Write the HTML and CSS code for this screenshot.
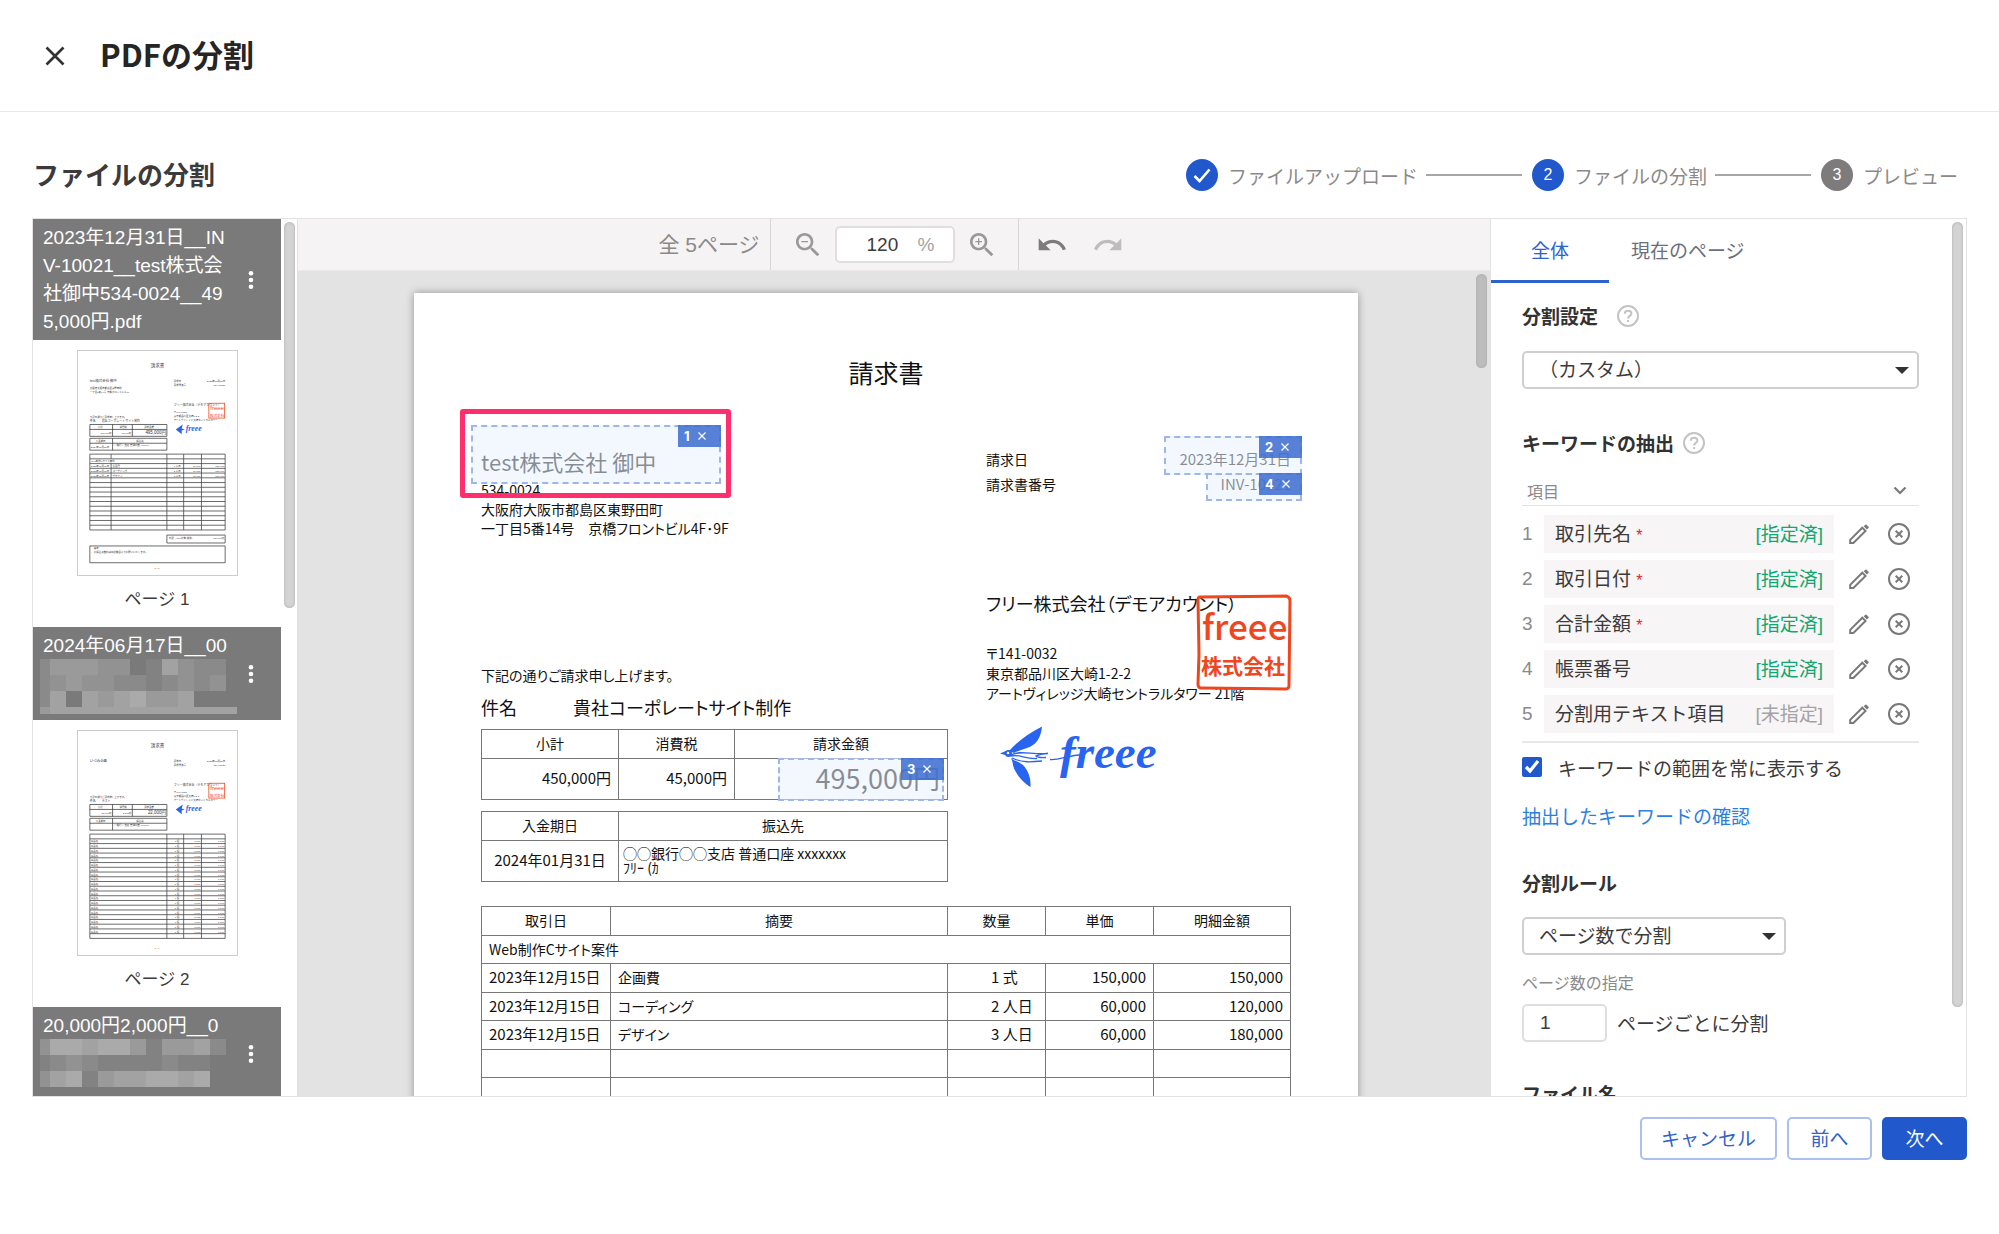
FILE: index.html
```html
<!DOCTYPE html>
<html lang="ja">
<head>
    <meta charset="UTF-8">
    <meta name="viewport" content="width=device-width, initial-scale=1.0">
    <title>PDFの分割</title>
    <link rel="stylesheet" href="styles.css">
</head>
<body>

    <header class="page-header">
        <button class="icon-btn" aria-label="閉じる">
            <svg width="20" height="20" viewBox="0 0 20 20"><path d="M1.5 1.5l17 17M18.5 1.5l-17 17" stroke="#323232" stroke-width="2.6" fill="none"/></svg>
        </button>
        <h1>PDFの分割</h1>
    </header>

    <div class="title-row">
        <h2>ファイルの分割</h2>
        <ol class="steps">
            <li class="step">
                <span class="step-num done"><svg width="20" height="20" viewBox="0 0 20 20"><path d="M2.5 11l5 5L17.5 4.5" stroke="#fff" stroke-width="2.6" fill="none"/></svg></span>
                ファイルアップロード
            </li>
            <li class="step"><span class="step-num done">2</span>ファイルの分割</li>
            <li class="step"><span class="step-num">3</span>プレビュー</li>
        </ol>
    </div>

    <main class="viewer">

        <!-- Page list -->
        <aside class="sidebar">
            <div class="file-head">
                <p class="file-name">2023年12月31日__INV-10021__test株式会社御中534-0024__495,000円.pdf</p>
                <button class="icon-btn menu-btn" aria-label="メニュー"><svg width="6" height="20" viewBox="0 0 6 20" fill="#fff"><circle cx="3" cy="3.3" r="2.3"/><circle cx="3" cy="10" r="2.3"/><circle cx="3" cy="16.7" r="2.3"/></svg></button>
            </div>
            <div class="thumb">
                <svg class="thumb-page" data-kind="first" viewBox="0 0 161 226" width="161" height="226"></svg>
                <p>ページ 1</p>
            </div>
            <div class="file-head">
                <p class="file-name">2024年06月17日__00<svg class="mosaic" data-mosaic="a" width="197" height="56" viewBox="0 0 197 56"></svg></p>
                <button class="icon-btn menu-btn" aria-label="メニュー"><svg width="6" height="20" viewBox="0 0 6 20" fill="#fff"><circle cx="3" cy="3.3" r="2.3"/><circle cx="3" cy="10" r="2.3"/><circle cx="3" cy="16.7" r="2.3"/></svg></button>
            </div>
            <div class="thumb">
                <svg class="thumb-page" data-kind="second" viewBox="0 0 161 226" width="161" height="226"></svg>
                <p>ページ 2</p>
            </div>
            <div class="file-head">
                <p class="file-name">20,000円2,000円__0<svg class="mosaic" data-mosaic="b" width="197" height="56" viewBox="0 0 197 56"></svg></p>
                <button class="icon-btn menu-btn" aria-label="メニュー"><svg width="6" height="20" viewBox="0 0 6 20" fill="#fff"><circle cx="3" cy="3.3" r="2.3"/><circle cx="3" cy="10" r="2.3"/><circle cx="3" cy="16.7" r="2.3"/></svg></button>
            </div>
            <div class="scrollbar sidebar-bar"></div>
        </aside>

        <!-- Document preview -->
        <section class="preview">
            <div class="toolbar">
                <div class="tool-pages">全 5ページ</div>
                <div class="tool-zoom">
                    <button class="icon-btn" aria-label="縮小"><svg width="32" height="32" viewBox="0 0 24 24" fill="#999"><path d="M15.5 14h-.79l-.28-.27C15.41 12.59 16 11.11 16 9.5 16 5.91 13.09 3 9.5 3S3 5.91 3 9.5 5.91 16 9.5 16c1.61 0 3.09-.59 4.23-1.57l.27.28v.79l5 4.99L20.49 19l-4.99-5zm-6 0C7.01 14 5 11.99 5 9.5S7.01 5 9.5 5 14 7.01 14 9.5 11.99 14 9.5 14zM7 9h5v1H7z"/></svg></button>
                    <label class="zoom-field"><input type="text" value="120" aria-label="倍率"><span>%</span></label>
                    <button class="icon-btn" aria-label="拡大"><svg width="32" height="32" viewBox="0 0 24 24" fill="#999"><path d="M15.5 14h-.79l-.28-.27C15.41 12.59 16 11.11 16 9.5 16 5.91 13.09 3 9.5 3S3 5.91 3 9.5 5.91 16 9.5 16c1.61 0 3.09-.59 4.23-1.57l.27.28v.79l5 4.99L20.49 19l-4.99-5zm-6 0C7.01 14 5 11.99 5 9.5S7.01 5 9.5 5 14 7.01 14 9.5 11.99 14 9.5 14zM12 10h-2v2H9v-2H7V9h2V7h1v2h2v1z"/></svg></button>
                </div>
                <div class="tool-history">
                    <button class="icon-btn" aria-label="元に戻す"><svg width="32" height="32" viewBox="0 0 24 24" fill="#7d7b7b"><path d="M12.5 8c-2.65 0-5.05.99-6.9 2.6L2 7v9h9l-3.62-3.62c1.39-1.16 3.16-1.88 5.12-1.88 3.54 0 6.55 2.31 7.6 5.5l2.37-.78C21.08 11.03 17.15 8 12.5 8z"/></svg></button>
                    <button class="icon-btn" aria-label="やり直す"><svg width="32" height="32" viewBox="0 0 24 24" fill="#bebcbc"><path d="M18.4 10.6C16.55 8.99 14.15 8 11.5 8c-4.65 0-8.58 3.03-9.96 7.22L3.9 16c1.05-3.19 4.05-5.5 7.6-5.5 1.95 0 3.73.72 5.12 1.88L13 16h9V7l-3.6 3.6z"/></svg></button>
                </div>
            </div>

            <div class="canvas">
                <article class="invoice">
                    <h3 class="invoice-title">請求書</h3>
                    <div class="invoice-top">
                        <div class="invoice-left">
                            <p class="client">test株式会社 御中</p>
                            <address>534-0024<br>大阪府大阪市都島区東野田町<br>一丁目5番14号　京橋フロントビル4F･9F</address>
                            <p class="greeting">下記の通りご請求申し上げます。</p>
                            <p class="subject"><span>件名</span>貴社コーポレートサイト制作</p>
                            <table class="sum-table">
                                <tr><th>小計</th><th>消費税</th><th>請求金額</th></tr>
                                <tr><td>450,000円</td><td>45,000円</td><td class="total">495,000円</td></tr>
                            </table>
                            <table class="bank-table">
                                <tr><th>入金期日</th><th>振込先</th></tr>
                                <tr><td class="due">2024年01月31日</td><td class="bank">◯◯銀行◯◯支店 普通口座 xxxxxxx<br>ﾌﾘｰ (ｶ</td></tr>
                            </table>
                        </div>
                        <div class="invoice-right">
                            <dl class="meta">
                                <dt>請求日</dt><dd>2023年12月31日</dd>
                                <dt>請求書番号</dt><dd>INV-10021</dd>
                            </dl>
                            <p class="company">フリー株式会社（デモアカウント）</p>
                            <address>〒141-0032<br>東京都品川区大崎1-2-2<br>アートヴィレッジ大崎セントラルタワー 21階</address>
                            <svg class="logo" width="180" height="68" viewBox="0 0 180 68">
                                <g fill="#2864f0">
                                    <path d="M9 26C16 18 27 9 42 1.5C41 13 36 20 27 23C22 25 17 26 14 28z"/>
                                    <path d="M11 33C14 36 20 37 24 41C29 47 31 54 30.5 62C22 57 13 46 12.5 37z"/>
                                    <path d="M0 28.5l7-3v5z"/>
                                    <circle cx="8.5" cy="28.5" r="3.5"/>
                                    <text class="logo-text" x="60" y="43">freee</text>
                                </g>
                                <circle cx="8" cy="28" r="1.3" fill="#fff"/>
                                <path d="M11 30C20 25 32 30 48 28.5C40 29 36 31 36 31C38 33 46 32.5 46 32.5M11 31C20 29 24 34 37 33.5M12 33C22 38 32 37 42 36M50 34.5c9 1 17-4 33-5" fill="none" stroke="#2864f0" stroke-width="1.3"/>
                            </svg>
                        </div>
                    </div>

                    <table class="items">
                        <tr><th>取引日</th><th>摘要</th><th>数量</th><th>単価</th><th>明細金額</th></tr>
                        <tr><td colspan="5" class="group">Web制作Cサイト案件</td></tr>
                        <tr><td>2023年12月15日</td><td>企画費</td><td>1 式</td><td>150,000</td><td>150,000</td></tr>
                        <tr><td>2023年12月15日</td><td>コーディング</td><td>2 人日</td><td>60,000</td><td>120,000</td></tr>
                        <tr><td>2023年12月15日</td><td>デザイン</td><td>3 人日</td><td>60,000</td><td>180,000</td></tr>
                        <tr><td></td><td></td><td></td><td></td><td></td></tr>
                        <tr><td></td><td></td><td></td><td></td><td></td></tr>
                    </table>

                    <!-- Seal and keyword ranges lie over the sheet -->
                    <svg class="seal" width="96" height="97" viewBox="0 0 96 97">
                        <path d="M4 3L90 2q4 1 4 5L93 92q0 3-4 3L5 94q-3 0-3-4L3 60 2 6q0-3 2-3z" fill="none" stroke="#f0461e" stroke-width="3"/>
                        <text class="seal-latin" x="6" y="46">freee</text>
                        <text class="seal-kanji" x="5" y="80">株式会社</text>
                    </svg>
                    <div class="range range-1"><span class="tag"><b>1</b><button aria-label="1を削除"><svg width="8" height="8" viewBox="0 0 8 8"><path d="M.5.5l7 7M7.5.5l-7 7" stroke="#fff" stroke-width="1.2"/></svg></button></span></div>
                    <div class="range range-2"><span class="tag"><b>2</b><button aria-label="2を削除"><svg width="8" height="8" viewBox="0 0 8 8"><path d="M.5.5l7 7M7.5.5l-7 7" stroke="#fff" stroke-width="1.2"/></svg></button></span></div>
                    <div class="range range-3"><span class="tag"><b>3</b><button aria-label="3を削除"><svg width="8" height="8" viewBox="0 0 8 8"><path d="M.5.5l7 7M7.5.5l-7 7" stroke="#fff" stroke-width="1.2"/></svg></button></span></div>
                    <div class="range range-4"><span class="tag"><b>4</b><button aria-label="4を削除"><svg width="8" height="8" viewBox="0 0 8 8"><path d="M.5.5l7 7M7.5.5l-7 7" stroke="#fff" stroke-width="1.2"/></svg></button></span></div>
                    <div class="focus-frame"></div>
                </article>
                <div class="scrollbar canvas-bar"></div>
            </div>
        </section>

        <!-- Settings -->
        <section class="settings">
            <div class="tabs">
                <button class="tab active">全体</button>
                <button class="tab">現在のページ</button>
            </div>
            <div class="settings-body">
                <div class="heading wide"><h3>分割設定</h3>
                    <svg class="help" width="22" height="22" viewBox="0 0 22 22"><circle cx="11" cy="11" r="10"/><path d="M7.8 8.7c0-4 6.6-4 6.6-.3 0 2.4-3.3 2.6-3.3 5M11.1 15v2"/></svg>
                </div>
                <div class="select-box">
                    <select aria-label="分割設定"><option>（カスタム）</option></select>
                </div>

                <div class="heading keyword"><h3>キーワードの抽出</h3>
                    <svg class="help" width="22" height="22" viewBox="0 0 22 22"><circle cx="11" cy="11" r="10"/><path d="M7.8 8.7c0-4 6.6-4 6.6-.3 0 2.4-3.3 2.6-3.3 5M11.1 15v2"/></svg>
                </div>
                <div class="list-head"><span>項目</span>
                    <button class="icon-btn" aria-label="開閉"><svg width="14" height="9" viewBox="0 0 14 9"><path d="M1.5 1.5L7 7l5.5-5.5" stroke="#7a7878" stroke-width="2.2" fill="none"/></svg></button>
                </div>
                <ul class="keywords"></ul>

                <label class="check"><input type="checkbox" checked>キーワードの範囲を常に表示する</label>
                <a class="confirm" href="#">抽出したキーワードの確認</a>

                <div class="heading rule"><h3>分割ルール</h3></div>
                <div class="select-box short">
                    <select aria-label="分割ルール"><option>ページ数で分割</option></select>
                </div>
                <label class="small-label" for="pages">ページ数の指定</label>
                <div class="pages-row"><input id="pages" type="text" value="1"><span>ページごとに分割</span></div>
                <div class="heading filename"><h3>ファイル名</h3></div>
            </div>
            <div class="scrollbar settings-bar"></div>
        </section>
    </main>

    <footer class="actions">
        <button class="btn">キャンセル</button>
        <button class="btn">前へ</button>
        <button class="btn primary">次へ</button>
    </footer>

    <script>
        // keyword rows: name, required, assigned
        const keywords = [
            ['取引先名', true, true],
            ['取引日付', true, true],
            ['合計金額', true, true],
            ['帳票番号', false, true],
            ['分割用テキスト項目', false, false]
        ];

        document.querySelector('.keywords').innerHTML = keywords.map(([name, required, assigned], i) => `
            <li>
                <span class="num">${i + 1}</span>
                <span class="keyword-box">
                    <span>${name}${required ? ' <i>*</i>' : ''}</span>
                    <span class="${assigned ? 'assigned' : 'unassigned'}">[${assigned ? '指定済' : '未指定'}]</span>
                </span>
                <button class="icon-btn" aria-label="編集"><svg width="22" height="22" viewBox="0 0 22 22"><path d="M2.2 20v-3.2L14.3 4.7l3.2 3.2L5.4 20z" fill="none" stroke="#7a7878" stroke-width="2"/><path d="M15.7 3.3l1.6-1.6q.6-.6 1.2 0l2 2q.6.6 0 1.2l-1.6 1.6z" fill="#7a7878"/></svg></button>
                <button class="icon-btn" aria-label="解除"><svg width="22" height="22" viewBox="0 0 22 22" fill="none" stroke="#7a7878" stroke-width="2"><circle cx="11" cy="11" r="10"/><path d="M7.7 7.7l6.6 6.6M14.3 7.7l-6.6 6.6"/></svg></button>
            </li>`).join('');

        // masked part of the file names, one digit per tile (0 = dark, 9 = light)
        const mosaics = {
            a: ['244433015322', '234332212323', '250545644500', '455555555555'],
            b: ['366566414452', '123211112110', '356145566560', '000000000000']
        };

        document.querySelectorAll('.mosaic').forEach((svg) => {
            const last = svg.dataset.mosaic === 'a' ? 7 : 8;
            svg.innerHTML = mosaics[svg.dataset.mosaic].map((row, y) => [...row].map((v, x) => {
                const c = 122 + v * 8;
                const w = x === 0 ? 10 : (y === 3 && x === 11 && last === 7 ? 27 : 16);
                return `<rect x="${x === 0 ? 0 : x * 16 - 6}" y="${y * 16}" width="${w}" height="${y === 3 ? last : 16}" fill="rgb(${c},${c},${c})"/>`;
            }).join('')).join('');
        });

        // small versions of the sheets
        const text = (x, y, s, size = 4, anchor = 'start') =>
            `<text x="${x}" y="${y}" font-size="${size}" text-anchor="${anchor}">${s}</text>`;
        const box = (x1, y1, x2, y2) => `M${x1} ${y1}H${x2}V${y2}H${x1}z`;

        document.querySelectorAll('.thumb-page').forEach((svg) => {
            const first = svg.dataset.kind === 'first';
            const rows = first ? 16 : 22;
            const top = 104;
            const step = 4.8;
            const bottom = top + rows * step;
            let lines = box(12, 74, 90, 86) + 'M12 79H90M35 74V86M55 74V86' +
                box(12, 88, 90, 100) + 'M12 93H90M35 88V100' + box(12, top, 149, bottom);
            for (let i = 1; i < rows; i++) lines += `M12 ${top + i * step}H149`;
            [90, 107, 125].forEach((x) => lines += `M${x} ${top}V${bottom}`);

            let out = text(80.5, 16, '請求書', 4.5, 'middle') + text(97, 31, '請求日', 2.5) + text(97, 35, '請求書番号', 2.5) +
                text(149, 31, '2023年12月31日', 2.5, 'end') + text(149, 35, 'INV-10021', 2.5, 'end') +
                text(97, 55, 'フリー株式会社（デモアカウント）', 3) + text(97, 62, '〒141-0032', 2.5) +
                text(97, 66, '東京都品川区大崎1-2-2', 2.5) + text(97, 70, 'アートヴィレッジ大崎セントラルタワー', 2.5) +
                text(12, 67, '下記の通りご請求申し上げます。', 2.5) + text(20, 78, '小計', 2.5) + text(42, 78, '消費税', 2.5) + text(67, 78, '請求金額', 2.5) +
                text(18, 92, '入金期日', 2.5) + text(59, 92, '振込先', 2.5) + text(36, 96, '○○銀行○○支店 普通口座 xxxxxxx', 2.5);
            if (first) {
                lines += `M33.5 ${top}V${top + step}M33.5 ${top + 2 * step}V${bottom}` + box(90, 186, 149, 194) + box(12, 197, 149, 214);
                out += text(12, 31, 'test株式会社 御中', 3.5) + text(12, 38, '大阪府大阪市都島区東野田町', 2.5) + text(12, 42, '一丁目5番14号 京橋フロントビル4F', 2.5) +
                    text(12, 72, '件名　　貴社コーポレートサイト制作', 3) + text(89, 84, '495,000円', 4.5, 'end') + text(34, 84, '450,000円', 2.5, 'end') + text(54, 84, '45,000円', 2.5, 'end') +
                    text(13, 98, '2024年01月31日', 2.5) + text(13, 112.5, 'Web制作Cサイト案件', 2.5) +
                    text(92, 190, '内訳　10%対象(税抜)', 2.5) + text(148, 190, '450,000円', 2.5, 'end') + text(16, 200, '備考', 2.5) + text(16, 204, 'お振込手数料は御社負担にてお願いいたします。', 2.5) + text(80, 220, '1 / 1', 2.5, 'middle');
                ['企画費', 'コーディング', 'デザイン'].forEach((s, i) => {
                    const y = 117.5 + i * step;
                    out += text(13, y, '2023年12月15日', 2.5) + text(35, y, s, 2.5) + text(97, y, i + 1 + ' 人日', 2.5) + text(124, y, '60,000', 2.5, 'end') + text(148, y, '150,000', 2.5, 'end');
                });
            } else {
                out += text(12, 31, 'いづみ企画', 3.5) + text(12, 72, '件名　　テスト', 3) + text(89, 84, '22,000円', 4.5, 'end') + text(34, 84, '20,000円', 2.5, 'end') + text(54, 84, '2,000円', 2.5, 'end') + text(80, 220, '1 / 4', 2.5, 'middle');
                for (let i = 0; i < 20; i++) {
                    const y = 112.5 + i * step;
                    out += text(13, y, '商品名', 2.5) + text(98, y, '1 個', 2.5) + text(124, y, '1,000', 2.5, 'end') + text(148, y, '1,000', 2.5, 'end');
                }
            }
            svg.innerHTML = `<path d="${lines}" fill="none" stroke="#444" stroke-width=".8"/>${out}
                <rect x="132.5" y="52.5" width="16" height="15" fill="none" stroke="#f0461e" stroke-width=".8"/>
                <g fill="#f0461e">${text(134, 59.5, 'freee', 6)}${text(133.5, 66, '株式会社', 3.7)}</g>
                <path d="M99 79l7-5-1 4 3 1-3 1 0 4z" fill="#2864f0"/><g class="thumb-logo">${text(109, 81, 'freee', 8)}</g>`;
        });
    </script>

</body>
</html>
```
FILE: styles.css
```css
* {
    margin: 0;
    padding: 0;
    box-sizing: border-box;
}

body {
    height: 100vh;
    display: flex;
    flex-direction: column;
    background: #fff;
    color: #3c3a3a;
    font-family: "Liberation Sans", "Noto Sans CJK JP", sans-serif;
    font-size: 19px;
    overflow: hidden;
}

button, input, select {
    font: inherit;
    color: inherit;
}

.icon-btn {
    display: flex;
    align-items: center;
    justify-content: center;
    border: none;
    background: none;
    cursor: pointer;
}

svg {
    display: block;
}

/* Header */
.page-header {
    display: flex;
    align-items: center;
    gap: 35px;
    height: 112px;
    padding: 0 45px;
    border-bottom: 1px solid #e9e7e7;
}

.page-header h1 {
    padding-bottom: 4px;
    color: #262525;
    font-family: "Noto Sans CJK JP", sans-serif;
    font-size: 31px;
    line-height: 40px;
}

.title-row {
    display: flex;
    align-items: center;
    justify-content: space-between;
    height: 106px;
    padding: 20px 41px 0 33px;
}

.title-row h2 {
    padding-bottom: 4px;
    font-size: 26px;
}

.steps {
    display: flex;
    align-items: center;
    list-style: none;
    color: #8c8989;
}

.step {
    display: flex;
    align-items: center;
    gap: 10px;
}

.step + .step::before {
    content: "";
    width: 96px;
    height: 2px;
    margin-left: 8px;
    background: #a8a6a6;
}

.step-num {
    display: flex;
    align-items: center;
    justify-content: center;
    width: 32px;
    height: 32px;
    border-radius: 50%;
    background: #7d7b7b;
    color: #fff;
    font-size: 16px;
}

.step-num.done {
    background: #2159cc;
}

/* Viewer */
.viewer {
    flex: 1;
    display: flex;
    min-height: 0;
    margin: 0 32px;
    border: 1px solid #e4e2e2;
    overflow: hidden;
}

.scrollbar {
    position: absolute;
    top: 3px;
    width: 11px;
    border-radius: 6px;
    background: #d4d4d4;
    box-shadow: inset 0 0 3px #aaa;
}

.sidebar {
    position: relative;
    flex: none;
    width: 265px;
    padding-right: 16px;
    border-right: 1px solid #e4e2e2;
    overflow: hidden;
}

.sidebar-bar {
    right: 2px;
    height: 386px;
}

.file-head {
    display: flex;
    align-items: center;
    justify-content: space-between;
    padding: 5px 14px 4px 10px;
    background: #7a7a7a;
    color: #fff;
}

.file-name {
    position: relative;
    width: 186px;
    line-height: 28px;
    word-break: break-all;
}

.file-name:has(.mosaic) {
    min-height: 84px;
}

.mosaic {
    position: absolute;
    top: 27px;
    left: -3px;
}

.menu-btn {
    width: 32px;
    height: 32px;
}

.thumb {
    display: flex;
    flex-direction: column;
    align-items: center;
    height: 287px;
    padding-top: 10px;
    font-size: 17px;
}

.thumb p {
    margin-top: 12px;
    line-height: 24px;
}

.thumb-page {
    border: 1px solid #ccc;
    fill: #333;
}

.thumb-logo {
    fill: #2864f0;
    font-family: "Liberation Serif", serif;
    font-style: italic;
    font-weight: bold;
}

/* Preview */
.preview {
    flex: 1;
    display: flex;
    flex-direction: column;
    min-width: 0;
}

.toolbar {
    display: grid;
    grid-template-columns: 1fr auto 1fr;
    height: 52px;
    background: #f5f3f4;
    border-bottom: 1px solid #e9e7e7;
}

.toolbar > div {
    display: flex;
    align-items: center;
}

.toolbar .tool-pages {
    justify-content: flex-end;
    padding: 0 10px 3px 0;
    color: #8c8989;
    font-size: 21px;
}

.tool-zoom {
    gap: 11px;
    padding: 0 20px 0 21px;
    border-left: 1px solid #d7d5d5;
    border-right: 1px solid #d7d5d5;
}

.zoom-field {
    display: flex;
    align-items: center;
    width: 120px;
    height: 37px;
    border: 2px solid #e0dede;
    border-radius: 5px;
    background: #fff;
}

.zoom-field input {
    width: 81px;
    padding-left: 30px;
    border: none;
    outline: none;
    background: none;
}

.zoom-field span {
    color: #a5a3a3;
}

.tool-history {
    gap: 24px;
    padding-left: 17px;
}

.canvas {
    position: relative;
    flex: 1;
    min-height: 0;
    padding: 22px 16px 0 0;
    background: #e3e3e3;
    overflow: hidden;
}

.canvas-bar {
    right: 3px;
    height: 94px;
    background: #bdbdbd;
}

/* Invoice sheet */
.invoice {
    position: relative;
    width: 944px;
    min-height: 1335px;
    margin: 0 auto;
    padding: 61px 67px;
    background: #fff;
    box-shadow: 0 0 8px rgba(0, 0, 0, 0.35);
    color: #111;
    font-family: "Noto Sans CJK JP", sans-serif;
    font-size: 14px;
    font-feature-settings: "palt";
}

.invoice-title {
    font-size: 25px;
    font-weight: 400;
    line-height: 36px;
    text-align: center;
}

.invoice-top {
    display: grid;
    grid-template-columns: 467px 1fr;
    gap: 38px;
    padding-top: 53px;
}

.client {
    padding-bottom: 2px;
    font-size: 22px;
    line-height: 36px;
}

.invoice address {
    font-style: normal;
    line-height: 19px;
}

.greeting {
    margin-top: 127px;
    line-height: 20px;
}

.subject {
    margin: 8px 0;
    font-size: 18px;
    line-height: 28px;
}

.subject span {
    display: inline-block;
    width: 92px;
}

.invoice table {
    width: 100%;
    border-collapse: collapse;
    table-layout: fixed;
}

.invoice th, .invoice td {
    height: 29px;
    padding-bottom: 2px;
    border: 1px solid #777;
    font-weight: 400;
    line-height: 20px;
}

.invoice td {
    padding: 0 7px 2px;
    font-size: 15px;
}

.sum-table th:nth-child(1), .bank-table th:nth-child(1) {
    width: 137px;
}

.sum-table th:nth-child(2) {
    width: 116px;
}

.invoice .sum-table td {
    height: 41px;
    text-align: right;
}

.invoice .sum-table .total {
    font-size: 27px;
}

.bank-table {
    margin-top: 11px;
}

.invoice .bank-table td {
    height: 41px;
}

.invoice .bank-table .due {
    text-align: center;
}

.invoice .bank-table .bank {
    padding: 0 4px 2px;
    font-size: 14px;
    line-height: 14px;
}

.meta {
    display: grid;
    grid-template-columns: 1fr auto;
    gap: 5px;
    padding-top: 6px;
    line-height: 20px;
}

.meta dd {
    font-size: 15px;
    text-align: right;
}

.company {
    margin-top: 95px;
    font-size: 18px;
    line-height: 28px;
    white-space: nowrap;
}

.invoice-right address {
    margin-top: 26px;
    line-height: 20px;
    white-space: nowrap;
}

.logo {
    margin: 22px 0 0 14px;
}

.logo-text {
    font-family: "Liberation Serif", serif;
    font-size: 47px;
    font-style: italic;
    font-weight: bold;
}

.invoice .items {
    margin-top: 24px;
}

.items th:nth-child(1) {
    width: 129px;
}

.items th:nth-child(3) {
    width: 98px;
}

.items th:nth-child(4) {
    width: 108px;
}

.items th:nth-child(5) {
    width: 137px;
}

.items tr:nth-child(even) td {
    height: 28px;
}

.items td:nth-child(2) {
    font-size: 14px;
}

.items td:nth-child(3) {
    padding-left: 43px;
    white-space: nowrap;
}

.items td:nth-child(4), .items td:nth-child(5) {
    text-align: right;
}

.invoice .items .group {
    font-size: 14px;
}

/* Things over the sheet */
.seal {
    position: absolute;
    top: 301px;
    left: 782px;
    fill: #f0461e;
}

.seal-latin {
    font-family: "Noto Sans CJK JP", sans-serif;
    font-size: 35px;
    font-weight: 500;
}

.seal-kanji {
    font-family: "Noto Sans CJK JP", sans-serif;
    font-size: 21px;
    font-weight: 700;
}

.range {
    position: absolute;
    border: 2px dashed #9db7ec;
    background: rgba(234, 243, 255, 0.55);
}

.range-1 {
    top: 132px;
    left: 57px;
    width: 250px;
    height: 59px;
}

.range-2 {
    top: 143px;
    left: 750px;
    width: 138px;
    height: 39px;
}

.range-3 {
    top: 465px;
    left: 364px;
    width: 166px;
    height: 43px;
}

.range-4 {
    top: 180px;
    left: 792px;
    width: 96px;
    height: 28px;
}

.tag {
    position: absolute;
    top: -2px;
    right: -2px;
    display: flex;
    align-items: center;
    gap: 8px;
    width: 43px;
    height: 22px;
    padding-left: 6px;
    background: rgba(64, 112, 209, 0.88);
    color: #fff;
    font-family: Inter, sans-serif;
    font-size: 13px;
}

.tag button {
    border: none;
    background: none;
}

.focus-frame {
    position: absolute;
    top: 116px;
    left: 46px;
    width: 271px;
    height: 89px;
    border: 5px solid #ff2e6d;
    border-radius: 3px;
}

/* Settings */
.settings {
    position: relative;
    flex: none;
    width: 476px;
    border-left: 1px solid #e4e2e2;
    overflow: hidden;
}

.settings-bar {
    right: 3px;
    height: 785px;
}

.tabs {
    display: flex;
    height: 64px;
}

.tab {
    padding: 0 22px;
    border: none;
    border-bottom: 3px solid transparent;
    background: none;
    color: #6b6f7d;
}

.tab.active {
    width: 118px;
    border-color: #2f62cc;
    color: #2f62cc;
}

.settings-body {
    padding: 19px 47px 0 31px;
}

.heading {
    display: flex;
    align-items: center;
    gap: 9px;
    height: 28px;
}

.heading.wide {
    gap: 19px;
}

.heading h3 {
    padding-bottom: 2px;
    color: #323232;
    font-size: 19px;
}

.help {
    fill: none;
    stroke: #c4c2c2;
    stroke-width: 2;
}

.select-box {
    position: relative;
    height: 38px;
    margin-top: 21px;
}

.select-box.short {
    width: 264px;
    margin-top: 20px;
}

.select-box select {
    width: 100%;
    height: 100%;
    padding-left: 15px;
    border: 2px solid #d0cece;
    border-radius: 5px;
    background: #fff;
    appearance: none;
}

.select-box::after {
    content: "";
    position: absolute;
    top: 16px;
    right: 10px;
    border: 7px solid transparent;
    border-top-color: #323232;
    border-bottom: none;
}

.heading.keyword {
    margin-top: 40px;
}

.list-head {
    display: flex;
    align-items: center;
    justify-content: space-between;
    height: 30px;
    margin-top: 19px;
    padding: 0 12px 0 5px;
    border-bottom: 1px solid #e4e2e2;
    color: #8c8989;
    font-size: 16px;
}

.keywords {
    display: flex;
    flex-direction: column;
    gap: 7px;
    padding: 9px 0 8px;
    border-bottom: 2px solid #e9e7e7;
    list-style: none;
}

.keywords li {
    display: flex;
    align-items: center;
    height: 38px;
    padding-right: 9px;
}

.num {
    width: 22px;
    color: #8c8989;
}

.keyword-box {
    flex: 1;
    display: flex;
    align-items: center;
    justify-content: space-between;
    height: 38px;
    margin-right: 14px;
    padding: 0 11px 3px;
    background: #f7f5f6;
}

.keyword-box i {
    color: #dc1e32;
    font-size: 16px;
    font-style: normal;
}

.keywords .icon-btn + .icon-btn {
    margin-left: 18px;
}

.assigned {
    color: #12a76f;
}

.unassigned {
    color: #a5a3a3;
}

.check {
    display: flex;
    align-items: center;
    gap: 16px;
    height: 28px;
    margin-top: 10px;
}

.check input {
    width: 20px;
    height: 20px;
    accent-color: #2159cc;
}

.confirm {
    display: block;
    margin-top: 23px;
    color: #2c7fe0;
    line-height: 28px;
    text-decoration: none;
}

.heading.rule {
    margin-top: 37px;
}

.small-label {
    display: block;
    margin-top: 17px;
    color: #8c8989;
    font-size: 16px;
    line-height: 24px;
}

.pages-row {
    display: flex;
    align-items: center;
    gap: 10px;
    margin-top: 8px;
}

.pages-row input {
    width: 85px;
    height: 38px;
    padding-left: 16px;
    border: 2px solid #e0dede;
    border-radius: 5px;
}

.pages-row span {
    padding-bottom: 2px;
}

.heading.filename {
    margin-top: 38px;
}

/* Footer */
.actions {
    display: flex;
    justify-content: flex-end;
    gap: 10px;
    padding: 20px 32px 74px;
}

.btn {
    min-width: 85px;
    height: 43px;
    padding: 0 19px 2px;
    border: 2px solid #a9c0f0;
    border-radius: 5px;
    background: #fff;
    color: #2f62cc;
    cursor: pointer;
}

.btn.primary {
    border-color: #2159cc;
    background: #2159cc;
    color: #fff;
}
```
